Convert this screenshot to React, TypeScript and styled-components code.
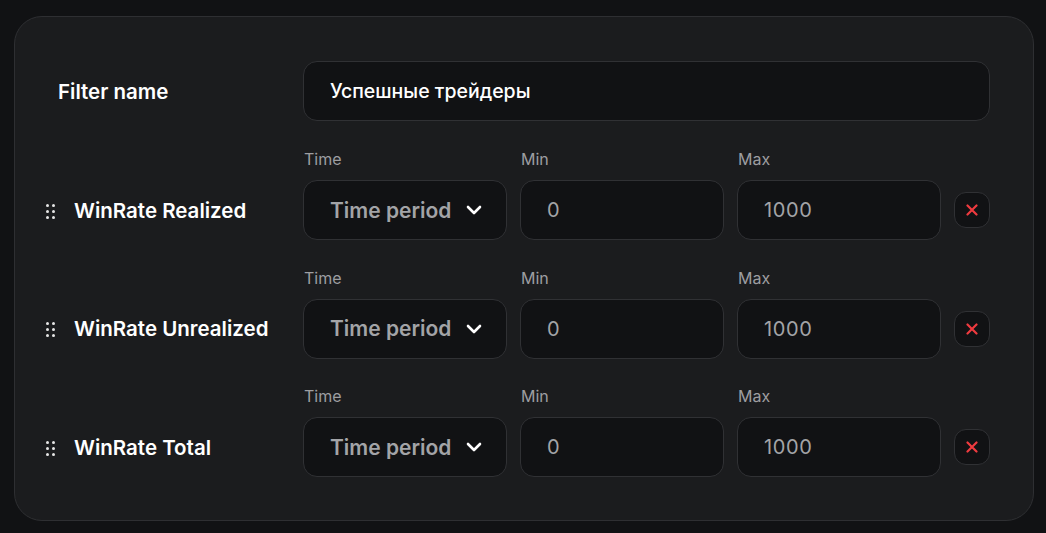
import styled, { createGlobalStyle } from "styled-components";

const GlobalStyle = createGlobalStyle`
  html, body {
    margin: 0;
    padding: 0;
    background: #111214;
  }
  body {
    font-family: Inter, "Noto Sans", sans-serif;
    color: #ffffff;
  }
`;

type FilterRow = {
  name: string;
  min: string;
  max: string;
};

const rows: FilterRow[] = [
  { name: "WinRate Realized", min: "0", max: "1000" },
  { name: "WinRate Unrealized", min: "0", max: "1000" },
  { name: "WinRate Total", min: "0", max: "1000" },
];

const Chevron = () => (
  <svg width="16" height="10" viewBox="0 0 16 10" fill="none">
    <path
      d="M2 2l6 6 6-6"
      stroke="#ffffff"
      strokeWidth="2.6"
      strokeLinecap="round"
      strokeLinejoin="round"
    />
  </svg>
);

const CloseIcon = () => (
  <svg width="12" height="12" viewBox="0 0 12 12" fill="none">
    <path
      d="M1.5 1.5l9 9M10.5 1.5l-9 9"
      stroke="#ef3b3f"
      strokeWidth="2.2"
      strokeLinecap="round"
    />
  </svg>
);

const App = () => {
  return (
    <Page>
      <GlobalStyle />
      <Card>
        <NameRow>
          <NameLabel>Filter name</NameLabel>
          <TextField defaultValue="Успешные трейдеры" bright />
        </NameRow>
        {rows.map((row) => (
          <Row key={row.name}>
            <RowTitle>
              <Handle>
                {Array.from({ length: 6 }).map((_, i) => (
                  <Dot key={i} />
                ))}
              </Handle>
              <span>{row.name}</span>
            </RowTitle>
            <Field>
              <Caption>Time</Caption>
              <Select>
                <span>Time period</span>
                <Chevron />
              </Select>
            </Field>
            <Field>
              <Caption>Min</Caption>
              <TextField defaultValue={row.min} />
            </Field>
            <Field>
              <Caption>Max</Caption>
              <TextField defaultValue={row.max} />
            </Field>
            <CloseButton>
              <CloseIcon />
            </CloseButton>
          </Row>
        ))}
      </Card>
    </Page>
  );
};

export default App;

const Page = styled.div`
  width: 1046px;
  height: 533px;
  padding: 16px 12px 0 14px;
  box-sizing: border-box;
`;

const Card = styled.div`
  width: 1020px;
  box-sizing: border-box;
  background: #1b1c1e;
  border: 1px solid #2e2f32;
  border-radius: 28px;
  padding: 44px 43px 43px 31px;
  display: flex;
  flex-direction: column;
  gap: 27.5px;
`;

const NameRow = styled.div`
  display: grid;
  grid-template-columns: 257px 1fr;
  align-items: center;
  margin-bottom: 0.5px;
`;

const NameLabel = styled.div`
  padding-left: 12px;
  font-size: 20.5px;
  font-weight: 600;
`;

const Row = styled.div`
  display: grid;
  grid-template-columns: 244px 1fr 1fr 1fr 36px;
  column-gap: 13px;
  align-items: end;
`;

const RowTitle = styled.div`
  height: 60px;
  display: flex;
  align-items: center;
  gap: 19px;
  font-size: 20.5px;
  font-weight: 600;
  white-space: nowrap;
`;

const Handle = styled.div`
  display: grid;
  grid-template-columns: 3px 3px;
  grid-template-rows: 3px 3px 3px;
  gap: 3px;
  margin-top: 2px;
`;

const Dot = styled.i`
  width: 3px;
  height: 3px;
  border-radius: 50%;
  background: #e6e6e6;
`;

const Field = styled.div`
  display: flex;
  flex-direction: column;
  gap: 11px;
  min-width: 0;
`;

const Caption = styled.div`
  font-size: 16px;
  line-height: 20px;
  color: #9d9ea1;
  padding-left: 1px;
`;

const TextField = styled.input<{ bright?: boolean }>`
  height: 60px;
  width: 100%;
  box-sizing: border-box;
  background: #111214;
  border: 1px solid #303134;
  border-radius: 14px;
  padding: 0 26px;
  font-family: Inter, "Noto Sans", sans-serif;
  font-size: ${(p) => (p.bright ? "19.5px" : "20px")};
  letter-spacing: ${(p) => (p.bright ? "0" : "0.6px")};
  font-weight: ${(p) => (p.bright ? 500 : 400)};
  color: ${(p) => (p.bright ? "#ffffff" : "#a3a4a7")};
  outline: none;
`;

const Select = styled.div`
  height: 60px;
  box-sizing: border-box;
  background: #111214;
  border: 1px solid #303134;
  border-radius: 14px;
  padding: 0 24px 0 26px;
  display: flex;
  align-items: center;
  justify-content: space-between;
  font-size: 21px;
  font-weight: 600;
  color: #a3a4a7;
`;

const CloseButton = styled.button`
  width: 36px;
  height: 36px;
  margin-bottom: 12px;
  padding: 0;
  border-radius: 12px;
  background: #111214;
  border: 1px solid #303134;
  display: flex;
  align-items: center;
  justify-content: center;
  cursor: pointer;
`;
